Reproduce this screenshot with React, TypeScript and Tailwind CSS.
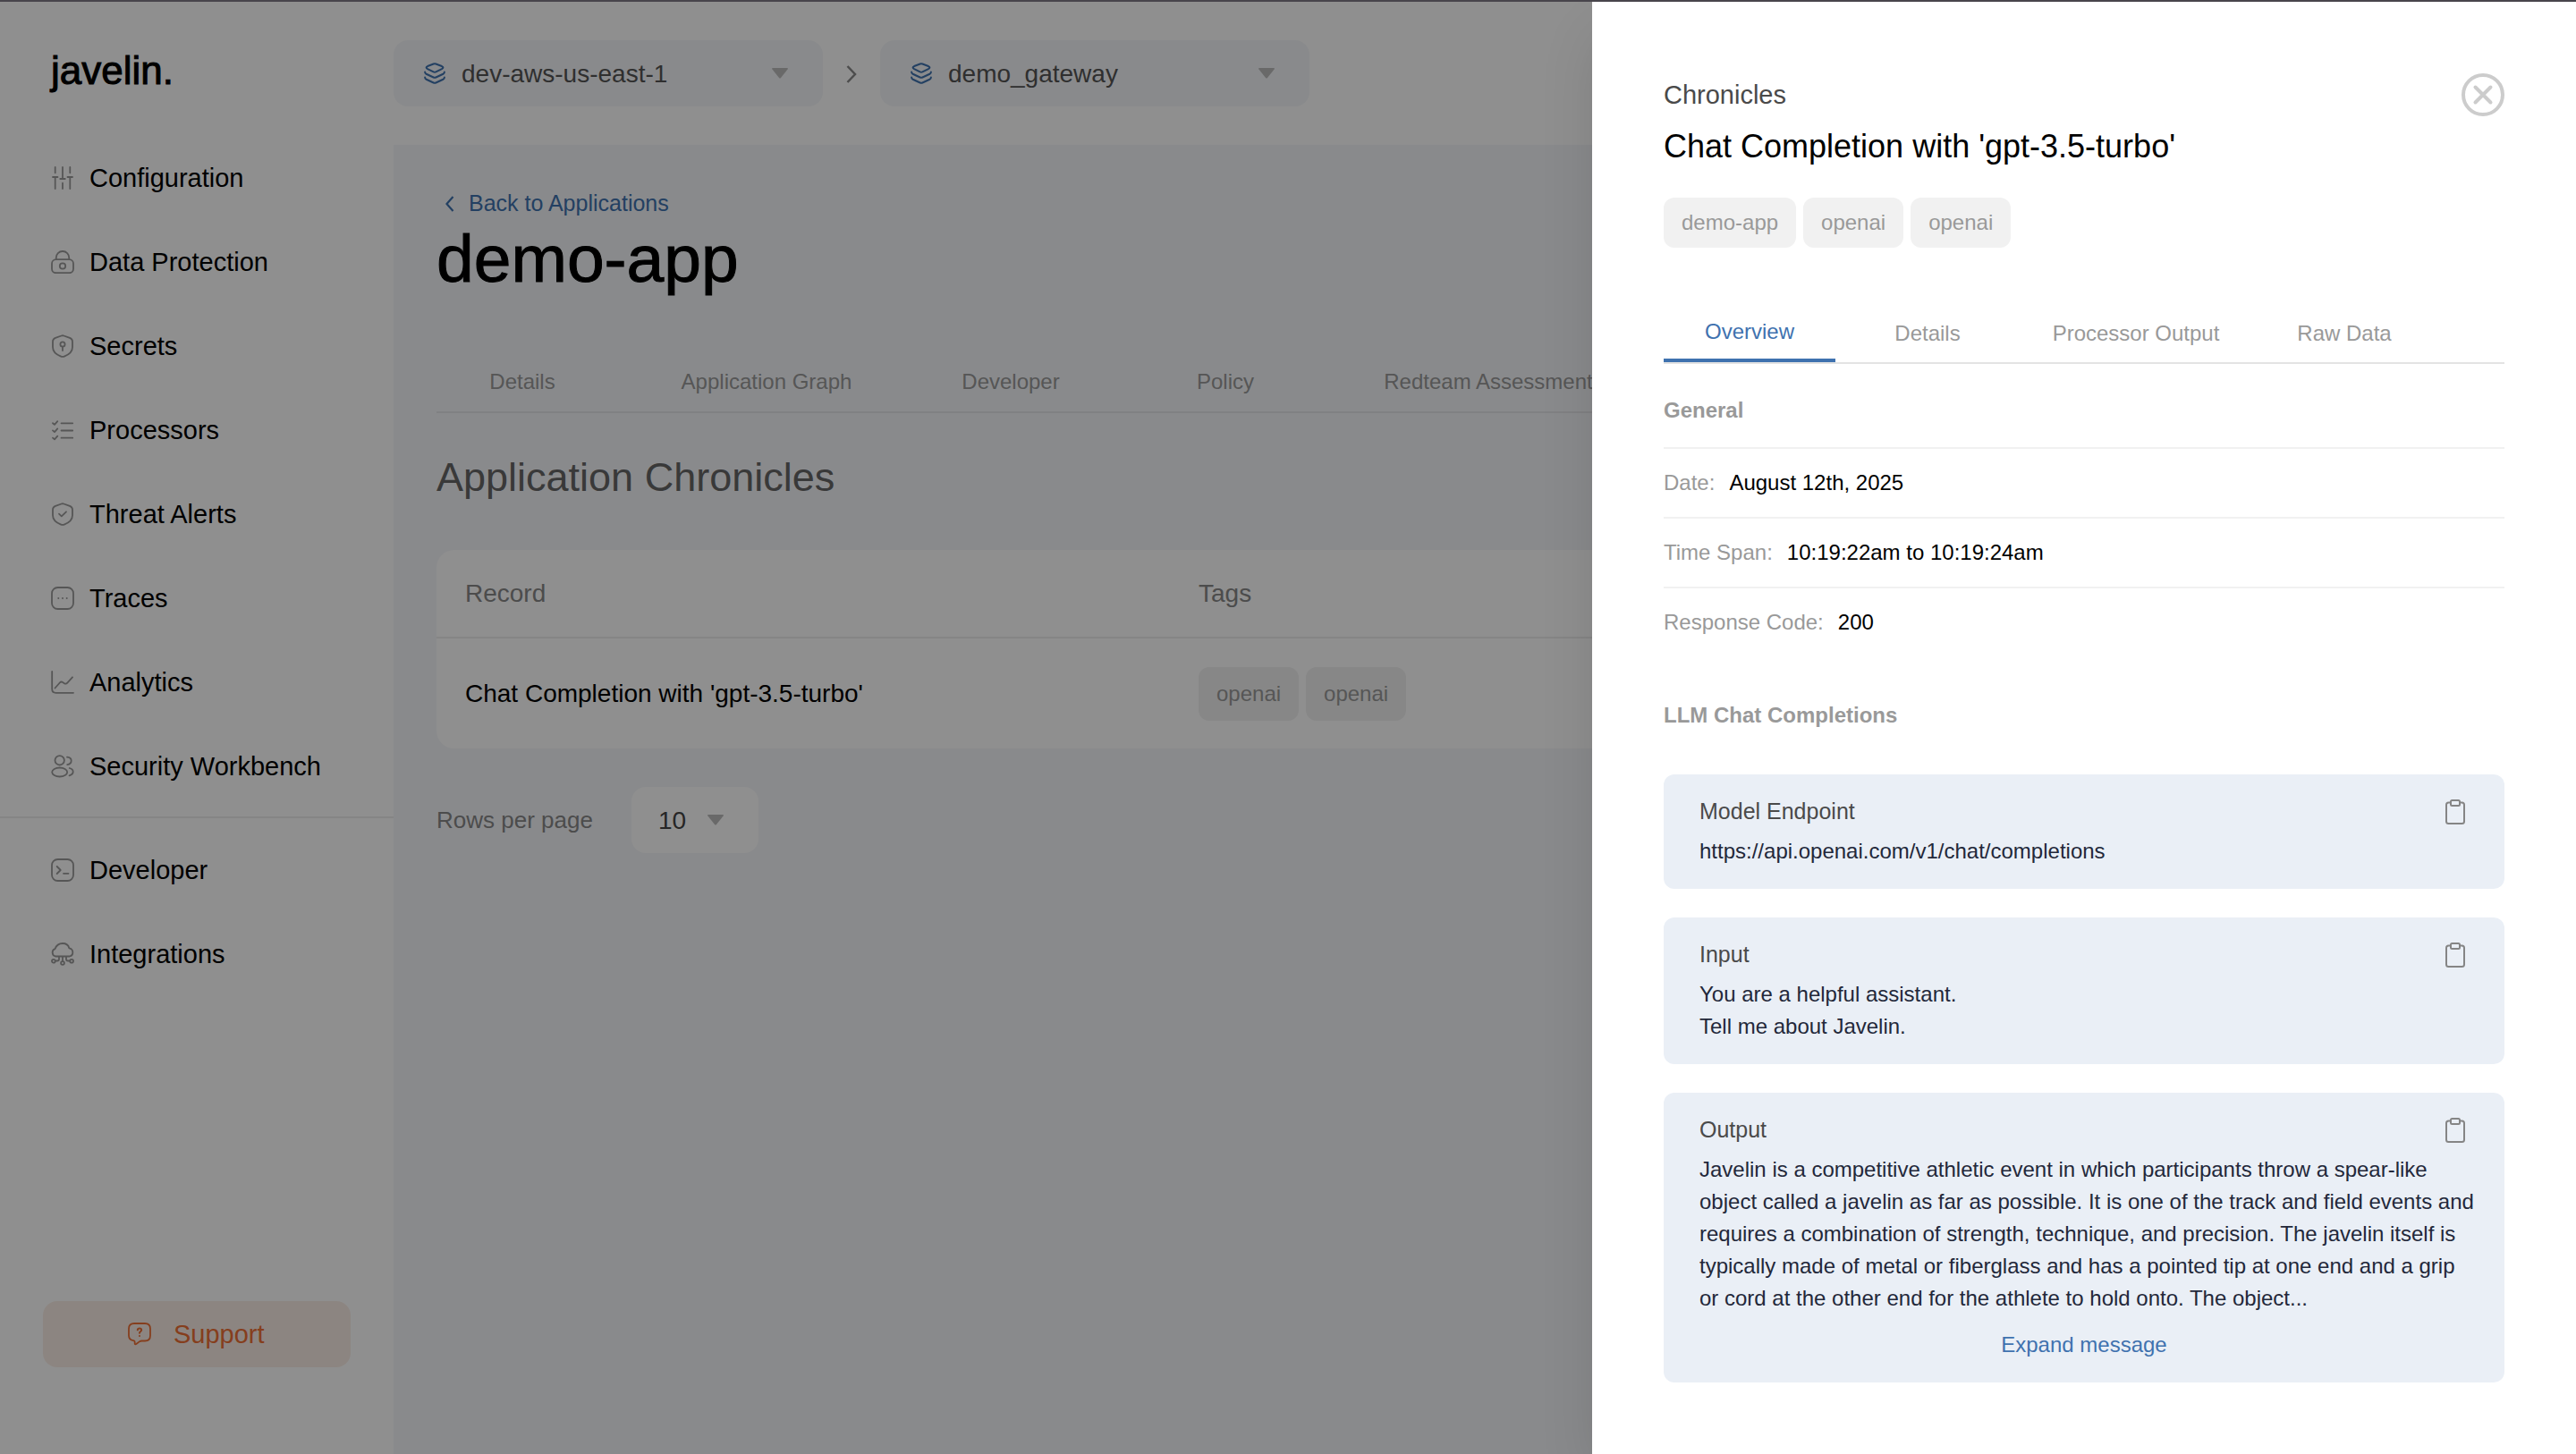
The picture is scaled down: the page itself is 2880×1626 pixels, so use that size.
import type { ReactNode } from "react";

function Icon({ children, className = "size-[26px]" }: { children: ReactNode; className?: string }) {
  return (
    <svg
      viewBox="0 0 26 26"
      fill="none"
      stroke="currentColor"
      strokeWidth="1.8"
      strokeLinecap="round"
      strokeLinejoin="round"
      aria-hidden="true"
      className={`shrink-0 ${className}`}
    >
      {children}
    </svg>
  );
}

const shield = "M11.6 1.5 5 3.8Q2 4.9 2 8v6.2c0 5 3.2 8 9.2 10.4q1.8.7 3.6 0C20.8 22.2 24 19.2 24 14.2V8q0-3.1-3-4.2l-6.6-2.3q-1.4-.5-2.8 0Z";

const primaryNav: { label: string; icon: ReactNode }[] = [
  {
    label: "Configuration",
    icon: <path d="M4.7 1v6.3M2 12h5.5M4.7 12v13M13 1v13M10.3 14h5.500M13 18.7V25M21.3 1v6.3M18.5 12H24M21.3 12v13" />,
  },
  {
    label: "Data Protection",
    icon: (
      <>
        <rect x="1" y="10.2" width="24" height="15" rx="4.5" />
        <path d="M5.8 10V8a7 7 0 0 1 7-7h.4a7 7 0 0 1 7 7v2" />
        <circle cx="13" cy="17.5" r="3.2" />
      </>
    ),
  },
  {
    label: "Secrets",
    icon: (
      <>
        <path d={shield} />
        <circle cx="13" cy="11" r="2.6" />
        <path d="M13 13.6V18" />
      </>
    ),
  },
  {
    label: "Processors",
    icon: (
      <path d="M11.5 5.3h12.7M11.5 13.5h12.7M11.5 21.7h12.7M2 5.2l2 1.7 3.3-3.7M2 13.4l2 1.7 3.3-3.7M2 21.6l2 1.7 3.3-3.7" />
    ),
  },
  {
    label: "Threat Alerts",
    icon: (
      <>
        <path d={shield} />
        <path d="m9 12.7 2.8 2.6 5.2-5" />
      </>
    ),
  },
  {
    label: "Traces",
    icon: (
      <>
        <rect x="1" y="1" width="24" height="24" rx="6.5" />
        <path strokeWidth="2" d="M8.3 13h.01M13 13h.01M17.7 13h.01" />
      </>
    ),
  },
  {
    label: "Analytics",
    icon: <path d="M1.2 1v19.5q0 4.3 4.3 4.3H25M4.5 19.5l5.3-6q1.5-1.7 3.3-.5l1.8 1.2q1.8 1.2 3.4-.6L24 7.3" />,
  },
  {
    label: "Security Workbench",
    icon: (
      <>
        <circle cx="9.7" cy="6.3" r="5.2" />
        <ellipse cx="9.7" cy="19.5" rx="8.5" ry="5" />
        <path d="M18 2.6c3 .3 4.7 2 4.7 4.2s-1.7 4-4.5 4.3M20.7 15c2.6.7 4 2 4 4s-1.5 3.5-4.2 4.3" />
      </>
    ),
  },
];

const secondaryNav: { label: string; icon: ReactNode }[] = [
  {
    label: "Developer",
    icon: (
      <>
        <rect x="1" y="1" width="24" height="24" rx="6.5" />
        <path d="m6.7 9 4 4-4 4M14 16.8h5.5" />
      </>
    ),
  },
  {
    label: "Integrations",
    icon: (
      <>
        <path d="M5.3 15.5A4.3 4.3 0 0 1 4.5 7.2C6 3 9 1 13 1s6.5 2 7.3 5.3a4.7 4.7 0 0 1 .5 9.2ZM13 15.5v5.2M9 15.5v3q0 2-2 2H4.8M17 15.5v3q0 2 2 2h2.2" />
        <circle cx="13" cy="23" r="1.9" />
        <circle cx="2.9" cy="20.7" r="1.9" />
        <circle cx="23.1" cy="20.7" r="1.9" />
      </>
    ),
  },
];

function NavList({ items }: { items: typeof primaryNav }) {
  return (
    <ul className="flex flex-col gap-[46px]">
      {items.map((item) => (
        <li key={item.label}>
          <a href="#" className="flex h-12 items-center gap-[17px] pl-[57px] text-[29px]">
            <Icon className="size-[26px] text-[#9a9a9a]">{item.icon}</Icon>
            <span className="pt-0.5">{item.label}</span>
          </a>
        </li>
      ))}
    </ul>
  );
}

function Caret({ className }: { className: string }) {
  return (
    <svg viewBox="0 0 18 12" fill="currentColor" aria-hidden="true" className={`pointer-events-none absolute h-3 w-[18px] text-[#bcbcbc] ${className}`}>
      <path d="M1 0h16q1.5.3.6 1.5L10 11q-1 1-2 0L.4 1.5Q-.5.3 1 0Z" />
    </svg>
  );
}

function HeaderSelect({ label, value }: { label: string; value: string }) {
  return (
    <div className="relative flex h-[74px] w-[480px] items-center">
      <select aria-label={label} className="size-full appearance-none rounded-2xl bg-[#f5f7fa] pt-0.5 pl-[76px] text-[28px] text-[#555555]">
        <option>{value}</option>
      </select>
      <Icon className="pointer-events-none absolute left-[34px] size-6 text-[#3f72af]">
        <g strokeWidth="2.2">
          <path d="M14.5 1.6 21.6 4.4q3.2 1.6 0 3.4l-7.1 3.5q-1.5.7-3 0L4.4 7.8q-3.2-1.8 0-3.4l7.1-2.8q1.5-.6 3 0Z" />
          <path d="M1.2 11.5q0 1.5 1.6 2.3l8.7 4.1q1.5.7 3 0l8.7-4.1q1.6-.8 1.6-2.3M1.2 18q0 1.5 1.6 2.3l8.7 4.1q1.5.7 3 0l8.7-4.1q1.6-.8 1.6-2.3" />
        </g>
      </Icon>
      <Caret className="right-[39px]" />
    </div>
  );
}

function Tag({ children, className }: { children: ReactNode; className: string }) {
  return <span className={`flex items-center rounded-xl bg-[#f1f1f1] px-5 text-2xl text-[#999999] ${className}`}>{children}</span>;
}

const pageTabs = [
  { label: "Details", width: "w-48" },
  { label: "Application Graph", width: "w-[354px]" },
  { label: "Developer", width: "w-48" },
  { label: "Policy", width: "w-72" },
  { label: "Redteam Assessment", width: "w-[300px]" },
];

const drawerTabs = [
  { label: "Details", width: "w-[206px]" },
  { label: "Processor Output", width: "w-[260px]" },
  { label: "Raw Data", width: "w-[206px]" },
];

const facts = [
  ["Date:", "August 12th, 2025"],
  ["Time Span:", "10:19:22am to 10:19:24am"],
  ["Response Code:", "200"],
];

function MessageCard({ title, lines, expandable = false }: { title: string; lines: string[]; expandable?: boolean }) {
  return (
    <article className="rounded-xl bg-[#eaeff6] py-6 pr-8 pl-10">
      <div className="flex h-9 items-center justify-between pr-3">
        <h4 className="text-[25px] text-[#4a4a4a]">{title}</h4>
        <button type="button" aria-label={`Copy ${title}`} className="text-[#858585]">
          <svg viewBox="0 0 22 28" fill="none" stroke="currentColor" strokeWidth="2" strokeLinejoin="round" className="h-7 w-[22px]" aria-hidden="true">
            <path d="M6 3.5H3.5Q1 3.5 1 6v18.5Q1 27 3.5 27h15q2.5 0 2.5-2.5V6q0-2.5-2.5-2.5H16" />
            <rect x="6" y="1" width="10" height="6" rx="1.5" />
          </svg>
        </button>
      </div>
      <div className="mt-2 text-2xl leading-9 text-[#23283a]">
        {lines.map((line) => (
          <p key={line}>{line}</p>
        ))}
      </div>
      {expandable && (
        <button type="button" className="mt-4 block h-9 w-full pr-2 text-center text-2xl text-[#3f72af]">
          Expand message
        </button>
      )}
    </article>
  );
}

export default function App() {
  return (
    <div className="relative flex min-h-screen overflow-hidden bg-white pt-0.5 font-['Liberation_Sans',Arial,sans-serif] text-black">
      <nav aria-label="Main" className="flex w-[440px] shrink-0 flex-col">
        <a href="#" className="mt-[50px] ml-[57px] self-start text-[44px] leading-[54px] font-medium [-webkit-text-stroke:1px_black]">
          javelin.
        </a>
        <div className="mt-[69px]">
          <NavList items={primaryNav} />
        </div>
        <div className="mt-8 border-t-2 border-[#ededed] pt-[34px]">
          <NavList items={secondaryNav} />
        </div>
        <button type="button" className="mx-12 mt-auto mb-[97px] flex h-[74px] items-center rounded-2xl bg-[#faeee6] pl-[95px] text-[29px] text-[#ee6f35]">
          <Icon className="mr-[25px] size-[26px]">
            <path d="M7 1h12q6 0 6 6v7.5q0 6-6 6h-3.5q-1.5 0-2.7.9L9.3 24q-1.6 1-1.6-.8v-1.3q0-1.4-1.5-1.7Q1 19.3 1 14.5V7q0-6 6-6Z" />
            <path strokeWidth="2" d="M10.8 8.3Q11 6.4 13 6.4t2.2 1.9c0 1.7-2.2 1.8-2.2 3.5M13 15h.01" />
          </Icon>
          <span className="pt-0.5">Support</span>
        </button>
      </nav>

      <div className="flex min-w-0 grow flex-col">
        <header className="flex h-40 items-start pt-[43px]">
          <HeaderSelect label="Environment" value="dev-aws-us-east-1" />
          <svg viewBox="0 0 12 20" fill="none" stroke="currentColor" strokeWidth="2.5" className="mx-[26px] mt-7 h-5 w-3 text-[#8a8a8a]" aria-hidden="true">
            <path d="m1.5 1 8.5 9-8.500 9" />
          </svg>
          <HeaderSelect label="Gateway" value="demo_gateway" />
        </header>

        <main className="grow bg-[#f5f7fa] px-12 pt-12">
          <a href="#" className="flex h-9 items-center gap-4 pl-2 text-[25px] text-[#3f72af]">
            <svg viewBox="0 0 12 18" fill="none" stroke="currentColor" strokeWidth="2.2" className="h-[18px] w-3" aria-hidden="true">
              <path d="m10.5 1-7 8 7 8" />
            </svg>
            Back to Applications
          </a>
          <h1 className="text-[75px] leading-[86px] font-medium [-webkit-text-stroke:1px_black]">demo-app</h1>

          <div role="tablist" className="mt-[62px] flex h-[68px] border-b-2 border-[#e4e6e9] text-2xl text-[#999999]">
            {pageTabs.map((tab) => (
              <button key={tab.label} type="button" role="tab" className={`shrink-0 ${tab.width}`}>
                {tab.label}
              </button>
            ))}
          </div>

          <h2 className="mt-[42px] text-[45px] leading-[60px] text-[#666666]">Application Chronicles</h2>

          <table className="mt-[51px] w-full table-fixed rounded-[20px] bg-white text-left text-[28px]">
            <thead>
              <tr className="h-[98px] text-[#888888]">
                <th className="w-[820px] border-b-2 border-[#ededed] px-8 font-normal">Record</th>
                <th className="border-b-2 border-[#ededed] px-8 font-normal">Tags</th>
              </tr>
            </thead>
            <tbody>
              <tr className="h-[124px]">
                <td className="px-8">Chat Completion with 'gpt-3.5-turbo'</td>
                <td className="px-8">
                  <div className="flex gap-2">
                    <Tag className="h-[60px]">openai</Tag>
                    <Tag className="h-[60px]">openai</Tag>
                  </div>
                </td>
              </tr>
            </tbody>
          </table>

          <div className="mt-[43px] flex items-center text-[#888888]">
            <label htmlFor="rows" className="w-[218px] text-[26px]">
              Rows per page
            </label>
            <div className="relative flex h-[74px] w-[142px] items-center">
              <select id="rows" className="size-full appearance-none rounded-2xl bg-white pt-0.5 pl-[30px] text-[28px] text-[#444444]">
                <option>10</option>
              </select>
              <Caret className="right-[39px]" />
            </div>
          </div>
        </main>
      </div>

      <div className="absolute inset-0 bg-black/44" />
      <div className="absolute inset-x-0 top-0 z-10 h-0.5 bg-[#48454c]" />

      <aside role="dialog" aria-label="Chronicle details" className="absolute inset-y-0 right-0 w-[1100px] max-w-full bg-white px-20 pt-[82px] shadow-[0_32px_64px_-12px_rgba(0,0,0,0.16)]">
        <div className="flex h-12 items-center justify-between">
          <p className="pt-0.5 text-[29px] text-[#4a4a4a]">Chronicles</p>
          <button type="button" aria-label="Close" className="text-[#cccccc]">
            <svg viewBox="0 0 48 48" fill="none" stroke="currentColor" strokeWidth="4" strokeLinecap="round" className="size-12" aria-hidden="true">
              <circle cx="24" cy="24" r="22" />
              <path d="m15.5 15.5 17 17m0-17-17 17" />
            </svg>
          </button>
        </div>
        <h2 className="mt-3 text-4xl leading-11">Chat Completion with 'gpt-3.5-turbo'</h2>
        <div className="mt-[35px] flex gap-2">
          <Tag className="h-14">demo-app</Tag>
          <Tag className="h-14">openai</Tag>
          <Tag className="h-14">openai</Tag>
        </div>

        <div role="tablist" className="mt-[60px] flex h-[70px] border-b-2 border-[#e3e3e3] text-2xl text-[#999999]">
          <button type="button" role="tab" aria-selected="true" className="w-48 border-b-4 border-[#3f72af] pt-1 text-[#3f72af]">
            Overview
          </button>
          {drawerTabs.map((tab) => (
            <button key={tab.label} type="button" role="tab" aria-selected="false" className={`pt-1 ${tab.width}`}>
              {tab.label}
            </button>
          ))}
        </div>

        <section>
          <h3 className="flex h-[93px] items-center pt-2.5 text-2xl font-bold text-[#999999]">General</h3>
          <dl className="text-2xl">
            {facts.map(([term, value]) => (
              <div key={term} className="flex h-[78px] items-center gap-4 border-t-2 border-[#f1f1f1]">
                <dt className="text-[#999999]">{term}</dt>
                <dd>{value}</dd>
              </div>
            ))}
          </dl>
        </section>

        <section>
          <h3 className="mt-12 mb-12 text-2xl leading-9 font-bold text-[#999999]">LLM Chat Completions</h3>
          <div className="flex flex-col gap-8">
            <MessageCard title="Model Endpoint" lines={["https://api.openai.com/v1/chat/completions"]} />
            <MessageCard title="Input" lines={["You are a helpful assistant.", "Tell me about Javelin."]} />
            <MessageCard
              title="Output"
              lines={[
                "Javelin is a competitive athletic event in which participants throw a spear-like object called a javelin as far as possible. It is one of the track and field events and requires a combination of strength, technique, and precision. The javelin itself is typically made of metal or fiberglass and has a pointed tip at one end and a grip or cord at the other end for the athlete to hold onto. The object...",
              ]}
              expandable
            />
          </div>
        </section>
      </aside>
    </div>
  );
}
